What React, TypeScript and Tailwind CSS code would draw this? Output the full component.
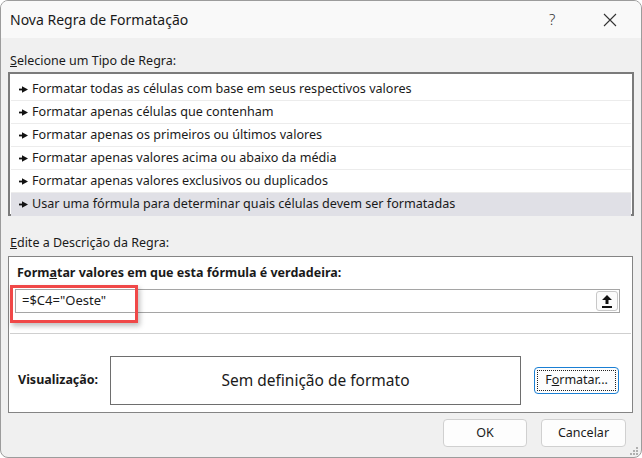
import React from 'react';

const rules = [
  'Formatar todas as células com base em seus respectivos valores',
  'Formatar apenas células que contenham',
  'Formatar apenas os primeiros ou últimos valores',
  'Formatar apenas valores acima ou abaixo da média',
  'Formatar apenas valores exclusivos ou duplicados',
  'Usar uma fórmula para determinar quais células devem ser formatadas',
];

function Pointer() {
  return (
    <svg width="9" height="7" viewBox="0 0 9 7" className="shrink-0">
      <rect x="0" y="2.6" width="4" height="1.8" fill="#111" />
      <polygon points="3,0.3 9,3.5 3,6.7" fill="#111" />
    </svg>
  );
}

export default function App() {
  return (
    <div
      className="w-[642px] h-[458px] bg-[#f0f0f0] border border-[#9c9c9c] rounded-lg overflow-hidden flex flex-col text-[#1a1a1a]"
      style={{ fontFamily: '"Segoe UI", "Noto Sans", sans-serif' }}
    >
      {/* title bar */}
      <div className="h-[37px] bg-[#f9f9f9] flex items-center pl-[9px] shrink-0">
        <span className="text-[14px]">Nova Regra de Formatação</span>
        <span className="ml-auto text-[15px] font-light text-[#333] w-[14px]">?</span>
        <svg width="14" height="14" viewBox="0 0 14 14" className="ml-[40px] mr-[24px]">
          <path d="M1 1 L13 13 M13 1 L1 13" stroke="#333" strokeWidth="1.1" />
        </svg>
      </div>

      <div className="flex flex-col px-[7px] pt-[14px] text-[12.5px]">
        <div className="h-[18px] leading-[18px] pl-[2px]">
          <span className="underline">S</span>elecione um Tipo de Regra:
        </div>

        {/* rule types list */}
        <div className="mt-[2px] h-[144px] border-2 border-[#7b7b7b] bg-white px-[1px] pt-[4px] flex flex-col text-[12.6px]">
          {rules.map((r, i) => (
            <div
              key={r}
              className={
                'h-[23px] shrink-0 flex items-center gap-[4px] pl-[8px] ' +
                (i === rules.length - 1 ? 'bg-[#e0e0e6]' : 'border-b border-[#ececec]')
              }
            >
              <Pointer />
              <span>{r}</span>
            </div>
          ))}
        </div>

        <div className="mt-[18px] h-[18px] leading-[18px] pl-[2px]">
          <span className="underline">E</span>dite a Descrição da Regra:
        </div>

        {/* description panel */}
        <div className="mt-[4px] w-[625px] h-[157px] border border-[#848484] bg-white flex flex-col">
          <div className="mt-[7px] h-[18px] leading-[18px] pl-[8px] font-bold">
            Form<span className="underline">a</span>tar valores em que esta fórmula é verdadeira:
          </div>

          <div className="relative mt-[7px] ml-[6px] mr-[12px] h-[24px] border border-[#a5a5a5] flex items-center pl-[6px]">
            <span className="text-[13px]">=$C4="Oeste"</span>
            <div className="ml-auto mr-[1px] w-[22px] h-[20px] border border-[#c8c8c8] rounded-[3px] bg-[#fbfbfb] flex items-center justify-center">
              <svg width="10" height="13" viewBox="0 0 10 13">
                <polygon points="5,0 10,5 6.5,5 6.5,9 3.5,9 3.5,5 0,5" fill="#111" />
                <rect x="0" y="11" width="10" height="2" fill="#111" />
              </svg>
            </div>
            <div className="absolute left-[-6px] top-[-5px] w-[128px] h-[38px] border-[3px] border-[#f04848] shadow-[2px_3px_5px_rgba(0,0,0,0.25)]" />
          </div>

          <div className="mt-[20px] mx-[1px] h-px bg-[#cfcfcf]" />

          <div className="mt-[22px] flex items-center pl-[9px]">
            <span className="w-[92px] font-bold">Visualização:</span>
            <div className="w-[411px] h-[49px] border border-[#6e6e6e] flex items-center justify-center text-[15.5px]">
              Sem definição de formato
            </div>
            <div className="ml-[13px] w-[85px] h-[27px] rounded-[4px] border border-[#1a7fd4] bg-[#fdfdfd] p-[2px]">
              <div className="w-full h-full border border-dotted border-[#222] flex items-center justify-center">
                <span>
                  F<span className="underline">o</span>rmatar...
                </span>
              </div>
            </div>
          </div>
        </div>

        {/* footer */}
        <div className="mt-[6px] flex justify-end gap-[14px] pr-[8px]">
          <div className="w-[84px] h-[28px] rounded-[4px] border border-[#d0d0d0] bg-[#fdfdfd] flex items-center justify-center">
            OK
          </div>
          <div className="w-[85px] h-[28px] rounded-[4px] border border-[#d0d0d0] bg-[#fdfdfd] flex items-center justify-center">
            Cancelar
          </div>
        </div>
      </div>

      <div className="mt-auto flex justify-end pr-[2px] pb-[2px]">
        <svg width="9" height="9" viewBox="0 0 9 9">
          <g fill="#b0b0b0">
            <rect x="6" y="0" width="2" height="2" />
            <rect x="3" y="3" width="2" height="2" />
            <rect x="6" y="3" width="2" height="2" />
            <rect x="0" y="6" width="2" height="2" />
            <rect x="3" y="6" width="2" height="2" />
            <rect x="6" y="6" width="2" height="2" />
          </g>
        </svg>
      </div>
    </div>
  );
}
